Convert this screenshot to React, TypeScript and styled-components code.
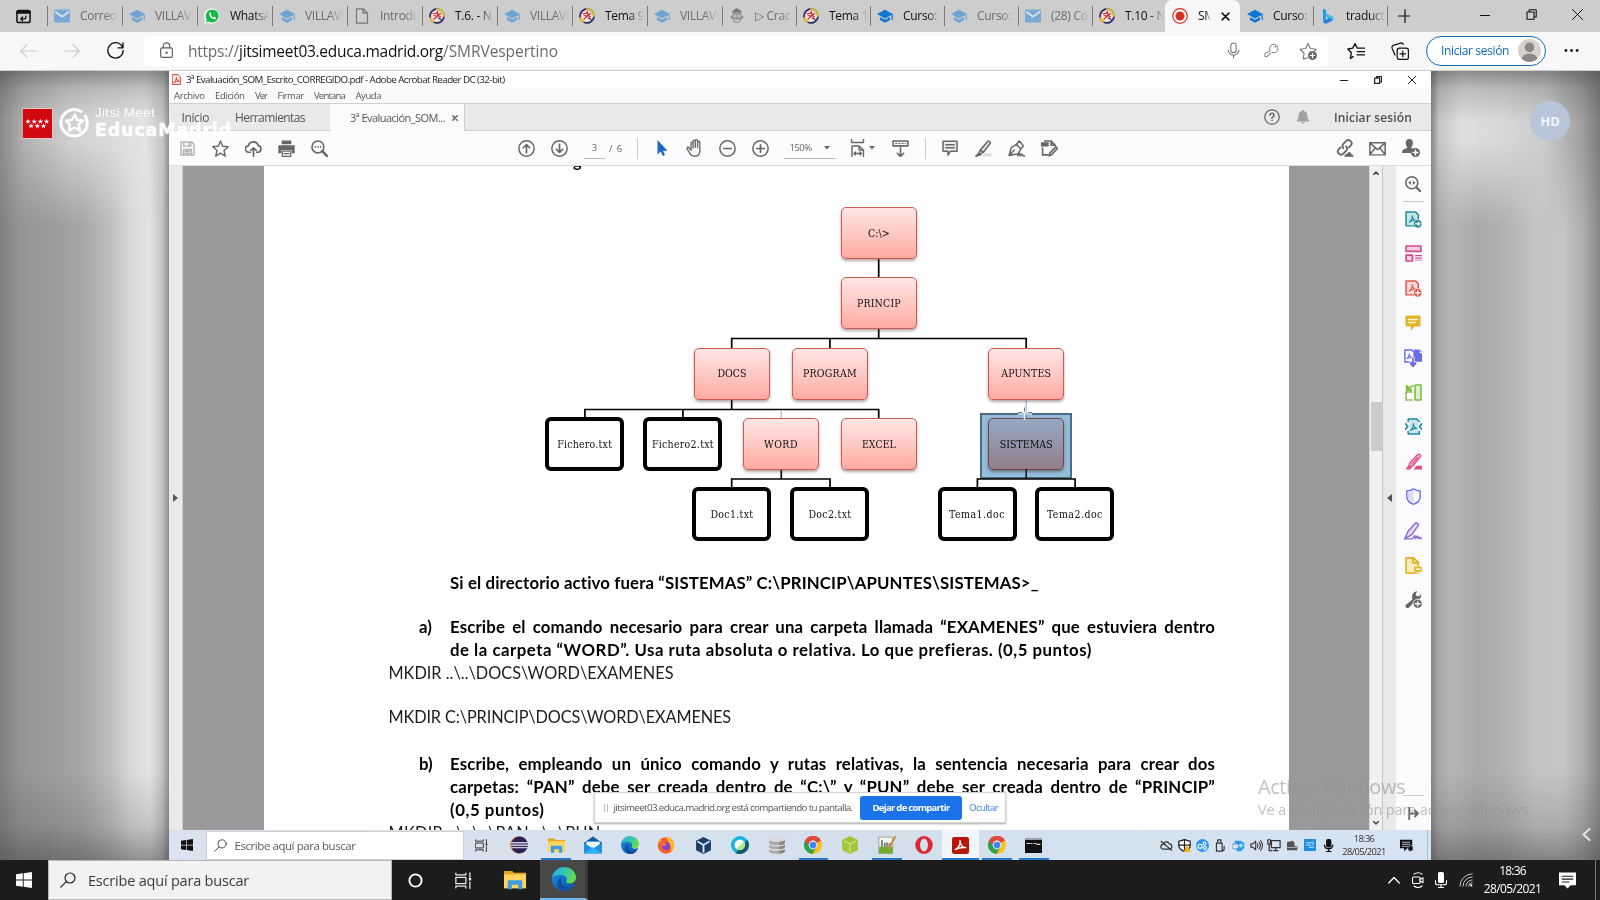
import React, { useLayoutEffect, useRef, useState } from 'react';
import styled, { createGlobalStyle, css } from 'styled-components';

const UI = '"Open Sans", "Noto Sans", sans-serif';

const Global = createGlobalStyle`
  * { box-sizing: border-box; }
  html, body { margin: 0; padding: 0; }
  body { width: 1600px; height: 900px; overflow: hidden; font-family: ${UI}; background: #1c1c1c; }
  svg { display: block; flex: none; }
`;

/* ---------- text that is tracked to a given width ---------- */
const Tracked = styled.span`
  display: inline-block;
  white-space: pre;
  flex: none;
`;

function Fit({ w, children, className }: { w: number; children: string; className?: string }) {
  const ref = useRef<HTMLSpanElement>(null);
  const [track, setTrack] = useState(0);
  useLayoutEffect(() => {
    if (ref.current) {
      setTrack((w - ref.current.getBoundingClientRect().width) / children.length);
    }
  }, []);
  return (
    <Tracked ref={ref} className={className} style={{ letterSpacing: `${track}px` }}>
      {children}
    </Tracked>
  );
}

/* ---------- generic pieces ---------- */
const Slot = styled.div<{ $w: number; $h?: string }>`
  width: ${(p) => p.$w}px;
  height: ${(p) => p.$h ?? '100%'};
  flex: none;
  display: flex;
  align-items: center;
  justify-content: center;
`;
const Space = styled.div<{ $w?: number }>`
  ${(p) => (p.$w === undefined ? css`flex: 1;` : css`flex: none; width: ${p.$w}px;`)}
`;

type IcoProps = { s?: number; h?: number; vb?: string; c?: string; sw?: number; children: React.ReactNode };
const Ico = ({ s = 16, h, vb = '0 0 16 16', c = 'currentColor', sw = 1, children }: IcoProps) => (
  <svg width={s} height={h ?? s} viewBox={vb} fill="none" stroke={c} strokeWidth={sw} strokeLinecap="round" strokeLinejoin="round">
    {children}
  </svg>
);

/* ---------- favicons ---------- */
const MailFav = () => (
  <Ico>
    <rect x="0" y="1.5" width="16" height="13" rx="1" fill="#7ba9d6" stroke="none" />
    <path d="M1.5 4 8 8.7 14.5 4" stroke="#dbe6f1" strokeWidth="1.6" />
  </Ico>
);
const CapFav = ({ c }: { c: string }) => (
  <Ico c="none">
    <path d="M8 1.8 0 6.1l8 4.4 6.6-3.6v5.2h1.2V6.1z" fill={c} />
    <path d="M2.9 8.9v3.1L8 14.8l5.100-2.800V8.900L8 11.700z" fill={c} />
  </Ico>
);
const WhatsFav = () => (
  <Ico c="none">
    <path d="M.3 15.800 1.300 12A7.600 7.600 0 1 1 4.200 14.700z" fill="#fff" />
    <circle cx="8.200" cy="7.900" r="6.500" fill="#14b84b" />
    <path d="M2 14.300 3 10.500 5.400 13.200z" fill="#14b84b" />
    <path d="M5.600 4.600c.5-.5 1-.3 1.200.2l.5 1.200c.1.300-.5.900-.5 1.100.6 1.200 1.500 1.900 2.600 2.400.3 0 .8-.9 1.100-.8l1.300.7c.5.300 0 1.600-1 1.900-2.600.5-6.600-3.500-5.200-6.700z" fill="#fff" />
  </Ico>
);
const FileFav = () => (
  <Ico c="#777" sw={1.2}><path d="M2.500.8h6.500l4.500 4.400v10h-11zM9 .8v4.400h4.500" /></Ico>
);
const MoodleFav = () => (
  <Ico c="none">
    <circle cx="8" cy="8" r="6.900" fill="#f2e3d6" stroke="#2b2a6b" strokeWidth="1.800" strokeDasharray="3 1" />
    <path d="M8 1.100A6.900 6.900 0 0 1 14.900 8" stroke="#d9c928" strokeWidth="1.800" strokeDasharray="3 1" />
    <path d="M1.300 10A6.900 6.900 0 0 0 4 13.800" stroke="#e0c52a" strokeWidth="1.800" />
    <path d="M4 5.500h3l1.500-2M8.500 4l.5 4M11.500 5.500 9 7.500l2.500 1.500M8.500 8 5 11M5 7.500 8 8" stroke="#d4263a" strokeWidth="1.200" />
    <path d="M9.500 10l2.500 1.500" stroke="#2b2a6b" strokeWidth="1.200" />
  </Ico>
);
const FaceFav = () => (
  <Ico c="none">
    <ellipse cx="8" cy="9" rx="5" ry="6.200" fill="#9a9a9e" />
    <path d="M1.500 8h2v3h-1zM14.500 8h-2v3h1z" fill="#8a8a8e" />
    <path d="M3 5c1-4 4-4 5-5 1 2 4 1 5 5-3-1.500-7-1.500-10 0z" fill="#77777c" />
    <path d="M5 8h2M9 8h2M6 12.200c1.500.8 3 .8 4 0" stroke="#e2e2e2" strokeWidth="1.200" />
  </Ico>
);
const RecFav = () => (
  <Ico><circle cx="8" cy="8" r="7.300" stroke="#d93025" strokeWidth="1.200" fill="#fff" /><circle cx="8" cy="8" r="4.500" fill="#d93025" stroke="none" /></Ico>
);
const BingFav = () => (
  <Ico c="none">
    <path d="M3 .8 6 2v9.500L3 13.800z" fill="#1b9de8" />
    <path d="M3 13.500 8 10.800 6.500 7.200 6 5.500l6.500 3.300c1.300 1.500.8 3-.2 4L6.500 15.500C5 15.700 3.500 15 3 13.500z" fill="#2a7be4" />
    <path d="M6 5.500l6.500 3.300c.8 1 1 2 .4 3L8 9.500z" fill="#36c5e0" />
  </Ico>
);

/* ---------- tab strip ---------- */
const Strip = styled.div`
  height: 32px;
  display: flex;
  align-items: stretch;
  background: #cdcdcd;
`;
const TabBox = styled.div<{ $w: number; $active?: boolean; $line?: boolean }>`
  width: ${(p) => p.$w}px;
  flex: none;
  display: flex;
  align-items: center;
  padding-left: 7px;
  gap: 10px;
  position: relative;
  overflow: hidden;
  ${(p) => p.$active && css`background: #f7f7f7; border-radius: 7px 7px 0 0;`}
  &::before {
    content: '';
    display: ${(p) => (p.$line ? 'block' : 'none')};
    position: absolute;
    left: 0;
    top: 6px;
    width: 1px;
    height: 20px;
    background: #7b7b7b;
  }
`;
const TabText = styled.span<{ $dim?: boolean; $w?: number }>`
  width: ${(p) => p.$w ?? 40}px;
  overflow: hidden;
  white-space: nowrap;
  font-size: 12px;
  letter-spacing: -0.3px;
  line-height: 18px;
  color: ${(p) => (p.$dim ? '#6c6c6c' : '#111')};
  -webkit-mask-image: linear-gradient(90deg, #000 60%, transparent 98%);
  mask-image: linear-gradient(90deg, #000 60%, transparent 98%);
`;
const dimBlue = '#6fa3d3';
const tabs: { t: string; icon: React.ReactNode; dim?: boolean; w: number; line?: boolean }[] = [
  { t: 'Correo V', icon: <MailFav />, dim: true, w: 75, line: true },
  { t: 'VILLAVE', icon: <CapFav c={dimBlue} />, dim: true, w: 75, line: true },
  { t: 'WhatsA', icon: <WhatsFav />, w: 75, line: true },
  { t: 'VILLAVE', icon: <CapFav c={dimBlue} />, dim: true, w: 75, line: true },
  { t: 'Introdu', icon: <FileFav />, dim: true, w: 75, line: true },
  { t: 'T.6. - N', icon: <MoodleFav />, w: 75, line: true },
  { t: 'VILLAVE', icon: <CapFav c={dimBlue} />, dim: true, w: 75, line: true },
  { t: 'Tema 9', icon: <MoodleFav />, w: 75, line: true },
  { t: 'VILLAVE', icon: <CapFav c={dimBlue} />, dim: true, w: 75, line: true },
  { t: '▷ Crac', icon: <FaceFav />, dim: true, w: 74, line: true },
  { t: 'Tema 1', icon: <MoodleFav />, w: 74, line: true },
  { t: 'Curso: ', icon: <CapFav c="#0c78d2" />, w: 74, line: true },
  { t: 'Curso: S', icon: <CapFav c={dimBlue} />, dim: true, w: 74, line: true },
  { t: '(28) Co', icon: <MailFav />, dim: true, w: 74, line: true },
  { t: 'T.10 - N', icon: <MoodleFav />, w: 73, line: true },
];

const TabStrip = () => (
  <Strip>
    <Slot $w={47}>
      <Ico s={15} c="#111" sw={1.6}>
        <rect x="1" y="1.500" width="14" height="13" rx="2" />
        <path d="M1.500 3.500h13" strokeWidth="3" />
        <path d="M10.500 7.500v1.500a1.500 1.500 0 0 1-1.500 1.500H5.500M7 8.500l-2 2 2 2" strokeWidth="1.400" />
      </Ico>
    </Slot>
    {tabs.map((t, i) => (
      <TabBox key={i} $w={t.w} $line={t.line}>
        {t.icon}
        <TabText $dim={t.dim}>{t.t}</TabText>
      </TabBox>
    ))}
    <TabBox $w={75} $active>
      <RecFav />
      <TabText $w={13}>SM</TabText>
      <Ico s={9} c="#111" sw={1.800}><path d="M2 2l12 12M14 2L2 14" strokeWidth="2.800" /></Ico>
    </TabBox>
    <TabBox $w={73}><CapFav c="#0c78d2" /><TabText>Curso: V</TabText></TabBox>
    <TabBox $w={74} $line><BingFav /><TabText>traduct</TabText></TabBox>
    <TabBox $w={38} $line>
      <Ico s={16} c="#111" sw={1.200}><path d="M11.500 1v13M5 7.500h13" transform="translate(-.5 .5)" /></Ico>
    </TabBox>
    <Space />
    <Slot $w={46} $h="29px"><Ico s={10} c="#111" vb="0 0 10 10"><path d="M0 5.500h10" /></Ico></Slot>
    <Slot $w={46} $h="29px"><Ico s={11} c="#111" vb="0 0 11 11" sw={1.100}><path d="M1 3h7v7.200H1zM3.200 3V.8h7V8H8" /></Ico></Slot>
    <Slot $w={46} $h="29px"><Ico s={11} c="#111" vb="0 0 11 11"><path d="M.5.5l10 10M10.500.5l-10 10" /></Ico></Slot>
  </Strip>
);

/* ---------- address bar row ---------- */
const NavBar = styled.div`
  height: 39px;
  display: flex;
  align-items: center;
  background: #f7f7f7;
  border-bottom: 1px solid #cfcfcf;
  padding-bottom: 1px;
`;
const Omnibox = styled.div`
  width: 1184px;
  height: 30px;
  flex: none;
  display: flex;
  align-items: center;
  background: #fff;
  border-radius: 4px;
  font-size: 15.500px;
  color: #6b6b6b;
  b { font-weight: 400; color: #111; }
`;
const Url = styled.div`
  display: flex;
  align-items: center;
  line-height: 22px;
`;
const SignIn = styled.div`
  width: 120px;
  height: 30px;
  flex: none;
  display: flex;
  align-items: center;
  justify-content: space-between;
  padding: 0 4px 1px 14px;
  border: 1px solid #0f6cbd;
  border-radius: 15px;
  background: #fff;
  font-size: 12px;
  color: #0f6cbd;
`;
const Nav = () => (
  <NavBar>
    <Space $w={6} />
    <Slot $w={44}><Ico c="#c9c9c9" sw={1.100}><path d="M15.500 8H.7M7 1.700.7 8 7 14.300" /></Ico></Slot>
    <Slot $w={44}><Ico c="#c9c9c9" sw={1.100}><path d="M.5 8h14.800M9 1.700 15.300 8 9 14.300" /></Ico></Slot>
    <Slot $w={43}><Ico s={17} c="#111" sw={1.300}><path d="M14.800 5.500A7.200 7.200 0 1 0 15.200 8M15 1v4.500h-4.500" /></Ico></Slot>
    <Space $w={7} />
    <Omnibox>
      <Slot $w={44}><Ico s={17} c="#5f5f5f" sw={1.100}><rect x="2.500" y="5.500" width="11" height="9" rx="1.500" /><path d="M5 5.500V3.800a3 3 0 0 1 6 0v1.700" /><circle cx="8" cy="10" r=".6" fill="#5f5f5f" /></Ico></Slot>
      <Url>
        <Fit w={51}>https://</Fit><b><Fit w={204}>jitsimeet03.educa.madrid.org</Fit></b><Fit w={115}>/SMRVespertino</Fit>
      </Url>
      <Space />
      <Slot $w={38}><Ico s={17} c="#777" sw={1}><rect x="5.500" y="1" width="5" height="9" rx="2.500" /><path d="M3 7.500a5 5 0 0 0 10 0M8 12.500V15" /></Ico></Slot>
      <Slot $w={38}><Ico s={15} c="#777" sw={1}><path d="M6.500 8.200A4.500 4.500 0 1 1 8.500 10L7 11.500H5.500V13H4v1.500H1v-3z" /><circle cx="12" cy="4" r=".5" /></Ico></Slot>
      <Slot $w={36}><Ico s={18} c="#777" sw={1}><path d="M8 14 3.800 15l.7-5L1 6.500l5-.7L8 1.300l2.200 4.500 5 .7-1.500 1.500" /><circle cx="12" cy="12" r="4" fill="#6c6c6c" stroke="none" /><path d="M12 10v4M10 12h4" stroke="#fff" /></Ico></Slot>
      <Space $w={2} />
    </Omnibox>
    <Space $w={6} />
    <Slot $w={44}><Ico s={18} c="#111" sw={1.200}><path d="M5.500 13 3 14.500l.8-5L.8 6.200l4.300-.7L7.200 1.500l2 4h3.300M9 8.500h6.500M9 11.500h6.500M10.500 5.500h5" /></Ico></Slot>
    <Slot $w={44}><Ico s={18} c="#111" sw={1.100}><rect x="5.500" y="5.500" width="10" height="10" rx="2" /><path d="M10.500 8v5M8 10.500h5M3.500 11.500 1 5.500A2 2 0 0 1 2 3l6.500-2a2 2 0 0 1 2.400 1.200" /></Ico></Slot>
    <Space $w={4} />
    <SignIn>
      <Fit w={68}>Iniciar sesión</Fit>
      <Ico s={23} vb="0 0 22 22" c="none"><circle cx="11" cy="11" r="11" fill="#d5d2cf" /><circle cx="11" cy="8" r="4.600" fill="#8b8683" /><path d="M3.500 19c1-6.500 14-6.500 15 0a11 11 0 0 1-15 0z" fill="#8b8683" /></Ico>
    </SignIn>
    <Slot $w={51}><Ico s={15} c="none"><g fill="#111"><circle cx="2" cy="8" r="1.500" /><circle cx="8" cy="8" r="1.500" /><circle cx="14" cy="8" r="1.500" /></g></Ico></Slot>
  </NavBar>
);

/* ---------- meeting stage ---------- */
const Stage = styled.div`
  height: 789px;
  display: flex;
  position: relative;
  overflow: hidden;
`;
const Gutter = styled.div<{ $side: 'left' | 'right' }>`
  width: 169px;
  flex: none;
  position: relative;
  background: ${(p) =>
    p.$side === 'left'
      ? 'linear-gradient(90deg, #808080 0, #949494 20px, #9d9d9d 55px, #a8a8a8 85px, #c0c0c0 112px, #dadada 132px, #e3e3e3 150px, #c4c4c4 162px, #8f8f8f 169px)'
      : 'linear-gradient(90deg, #858585 0, #a8a8a8 7px, #b5b5b5 20px, #aaaaaa 48px, #b2b2b2 75px, #c5c4c2 105px, #c4c5c5 132px, #adadad 152px, #888888 169px)'};
  &::before {
    content: '';
    position: absolute;
    inset: 0;
    background: ${(p) =>
      p.$side === 'left'
        ? 'linear-gradient(90deg, #8a8a8a 0, #b2b2b2 25px, #d0d0d0 70px, #e4e4e4 145px, #c4c4c4 163px, #8f8f8f 169px)'
        : 'linear-gradient(90deg, #858585 0, #c4c4c4 8px, #dedede 30px, #d8d8d8 70px, #c9cbca 115px, #a0a0a0 150px, #7c7c7c 169px)'};
    -webkit-mask-image: linear-gradient(180deg, #000 70px, transparent 155px);
    mask-image: linear-gradient(180deg, #000 70px, transparent 155px);
  }
  &::after {
    content: '';
    position: absolute;
    inset: 0;
    background: linear-gradient(180deg, rgba(60, 60, 60, 0.500) 0, rgba(60, 60, 60, 0.200) 18px, transparent 50px, transparent 700px, rgba(60, 60, 60, 0.180) 755px, rgba(60, 60, 60, 0.480) 789px);
  }
`;
const Share = styled.div`
  width: 1262px;
  flex: none;
  display: flex;
  flex-direction: column;
  position: relative;
  background: #fff;
`;

/* ---------- acrobat chrome ---------- */
const TitleBar = styled.div`
  height: 17px;
  display: flex;
  align-items: center;
  padding: 0 2px 0 3px;
  gap: 5px;
  font-size: 9.800px;
  color: #222;
  background: #fff;
`;
const MenuBar = styled.div`
  height: 15px;
  display: flex;
  align-items: center;
  padding: 0 0 0 5px;
  font-size: 9.500px;
  color: #555;
  background: #fafafa;
`;
const AcroTabs = styled.div`
  height: 28px;
  display: flex;
  align-items: center;
  font-size: 12px;
  color: #555;
  background: #e9e9e9;
  border-top: 1px solid #cfcfcf;
  border-bottom: 1px solid #cfcfcf;
`;
const AcroTab = styled.div`
  width: 135px;
  height: 28px;
  margin-bottom: -1px;
  display: flex;
  align-items: center;
  padding-left: 20px;
  gap: 7px;
  font-size: 11px;
  background: #fbfbfd;
  border-right: 1px solid #cfcfcf;
`;
const Strong = styled.span`
  font-weight: 600;
  font-size: 12px;
  color: #4f4f4f;
`;
const ToolBar = styled.div`
  height: 35px;
  display: flex;
  align-items: center;
  color: #666;
  font-size: 9.500px;
  background: #fcfcfe;
  border-bottom: 1px solid #dcdcde;
`;
const Field = styled.div<{ $w: number }>`
  width: ${(p) => p.$w}px;
  height: 22px;
  flex: none;
  display: flex;
  align-items: center;
  justify-content: space-around;
  border-bottom: 1px solid #bdbdbd;
`;
const Rule = styled.div`
  width: 1px;
  height: 21px;
  flex: none;
  background: #cccccc;
`;
const Caret = () => <Ico s={6} h={4} vb="0 0 6 4" c="none"><path d="M0 0h6L3 3.600z" fill="#666" /></Ico>;
const G = '#666';

const AcrobatTop = () => (
  <>
    <TitleBar>
      <Ico s={9} h={11} vb="0 0 9 11" c="#d8402f"><path d="M.6.600h5.400l2.400 2.500v7.300H.6z" fill="#fdeae7" /><path d="M2 8.500c1.500-1 2.500-3 2.300-5 .3 2.300 1.300 3.500 3 3.700C5.500 7 3.500 7.300 2 8.500z" /></Ico>
      <Fit w={318.500}>3ª Evaluación_SOM_Escrito_CORREGIDO.pdf - Adobe Acrobat Reader DC (32-bit)</Fit>
      <Space />
      <Slot $w={34}><Ico s={8} vb="0 0 8 8" c="#222"><path d="M0 4.500h8" /></Ico></Slot>
      <Slot $w={24}><Ico s={8} vb="0 0 8 8" c="#222" sw={1.200}><path d="M.6 2.200h5v5.200h-5zM2.500 2V.6h5V6H6" /></Ico></Slot>
      <Slot $w={34}><Ico s={8} vb="0 0 8 8" c="#222"><path d="M.4.400l7.200 7.200M7.600.400.4 7.600" /></Ico></Slot>
    </TitleBar>
    <MenuBar>
      <Fit w={30.500}>Archivo</Fit><Space $w={10.500} />
      <Fit w={29.500}>Edición</Fit><Space $w={10.500} />
      <Fit w={12}>Ver</Fit><Space $w={10.500} />
      <Fit w={26}>Firmar</Fit><Space $w={10.500} />
      <Fit w={31}>Ventana</Fit><Space $w={10.500} />
      <Fit w={25.500}>Ayuda</Fit>
    </MenuBar>
    <AcroTabs>
      <Space $w={12.500} /><Fit w={27.500}>Inicio</Fit>
      <Space $w={26} /><Fit w={70}>Herramientas</Fit>
      <Space $w={25} />
      <AcroTab>
        <Fit w={95}>3ª Evaluación_SOM...</Fit>
        <Ico s={6} vb="0 0 6 6" c="#555" sw={1.300}><path d="M.8.800l4.400 4.400M5.200.800.8 5.200" /></Ico>
      </AcroTab>
      <Space />
      <Ico s={16} c={G} sw={1.300}><circle cx="8" cy="8" r="7.200" /><path d="M6 6.200a2 2 0 1 1 2.500 2c-.4.200-.5.400-.5 1M8 11.300v.2" strokeWidth="1.500" /></Ico>
      <Space $w={16} />
      <Ico s={14} c="none"><path d="M8 0c.8 0 1.200.5 1.200 1.200C12 2 13 4 13 6.500c0 3 .8 4 2 5.500v1H1v-1c1.200-1.500 2-2.500 2-5.500 0-2.500 1-4.500 3.800-5.300C6.800.500 7.200 0 8 0zM6 14h4c0 2.200-4 2.200-4 0z" fill="#a2a2a2" /></Ico>
      <Space $w={24} />
      <Strong><Fit w={78}>Iniciar sesión</Fit></Strong>
      <Space $w={19} />
    </AcroTabs>
    <ToolBar>
      <Space $w={2} />
      <Slot $w={33}><Ico s={15} c="#b3b3b3" sw={1.500}><path d="M1 1h11.500L15 3.500V15H1zM4 1v4.500h7.500V1M3.800 15V9h8.400v6M5.500 11h5M5.500 13h5M9.500 2.500v1.500" /></Ico></Slot>
      <Slot $w={33}><Ico s={17} c={G} sw={1.300}><path d="M8 1l2.100 4.900 5.200.5-4 3.500 1.200 5.200L8 12.400l-4.500 2.700 1.200-5.200-4-3.500 5.200-.5z" /></Ico></Slot>
      <Slot $w={33}><Ico s={17} c={G} sw={1.500}><path d="M5 11.500H3.500a3 3 0 0 1-.3-6 4.800 4.800 0 0 1 9.300-.2 3.200 3.200 0 0 1 .2 6.200H11M8 15.500V7.500M5.500 9.800 8 7.300l2.500 2.500" /></Ico></Slot>
      <Slot $w={32}><Ico s={17} c="none"><path d="M3.500.5h9v3.500h-9zM.3 5h15.400v7.500H13V9.500H3v3H.3z" fill={G} /><path d="M4 10.500h8v5H4z" fill="#fff" stroke={G} strokeWidth="1.200" /><path d="M5.500 12.800h5" stroke={G} /></Ico></Slot>
      <Slot $w={35}><Ico s={17} c={G} sw={1.500}><circle cx="6.500" cy="6.500" r="5.600" /><path d="M10.800 10.800 15 15" strokeWidth="2.300" /><path d="M4 6.500h.1M6.500 6.500h.1M9 6.500h.1" /></Ico></Slot>
      <Space $w={172.500} />
      <Slot $w={33}><Ico s={17} c={G} sw={1.400}><circle cx="8" cy="8" r="7.200" /><path d="M8 12V4.500M5 7.300 8 4.300l3 3" strokeWidth="1.600" /></Ico></Slot>
      <Slot $w={33}><Ico s={17} c={G} sw={1.400}><circle cx="8" cy="8" r="7.200" /><path d="M8 4v7.500M5 8.700l3 3 3-3" strokeWidth="1.600" /></Ico></Slot>
      <Space $w={8.500} />
      <Field $w={21}>3</Field>
      <Space $w={4} />
      <Fit w={13}>/  6</Fit>
      <Space $w={15} />
      <Rule />
      <Space $w={7} />
      <Slot $w={33}><Ico s={16} c="none"><path d="M3.500 0v14.500l3.300-3 2 4.500 2.200-1-2-4.300h4.500z" fill="#1b66c9" /></Ico></Slot>
      <Slot $w={33}><Ico s={18} c={G} sw={1.200}><path d="M4.500 9V3.700c0-1.200 1.800-1.200 1.800 0V2c0-1.300 2-1.300 2 0v-.5c0-1.200 2-1.200 2 0V3c0-1.300 2-1.300 2 0v7.500c0 3-1.500 4.800-4.500 4.800-2.500 0-3.800-1-5-3.500L1 8.800c-.6-1.300 1-2 1.800-.8L4.500 10M6.300 3.500V8M8.300 2v5.500M10.300 3v4.700" /></Ico></Slot>
      <Slot $w={32.500}><Ico s={17} c={G} sw={1.400}><circle cx="8" cy="8" r="7.200" /><path d="M4.500 8h7" strokeWidth="1.600" /></Ico></Slot>
      <Slot $w={33}><Ico s={17} c={G} sw={1.400}><circle cx="8" cy="8" r="7.200" /><path d="M4.500 8h7M8 4.500v7" strokeWidth="1.600" /></Ico></Slot>
      <Space $w={7} />
      <Field $w={52}><Fit w={22}>150%</Fit><Caret /></Field>
      <Space $w={14} />
      <Ico s={16} h={18} vb="0 0 16 18" c={G} sw={1.400}><path d="M1.500 0v3.500h12V0M2 18V7h7l4.500 4V18M9 7v4h4.500M4 14.500h7.500M5.500 13 4 14.500 5.500 16M10 13l1.500 1.500L10 16" /></Ico>
      <Space $w={3} /><Caret />
      <Space $w={14} />
      <Slot $w={24}><Ico s={17} c={G} sw={1.500}><rect x="1" y="1" width="14" height="4.500" /><path d="M3.500 3.200h1M6.500 3.200h1M9.500 3.200h1M12.500 3.200h.3" strokeWidth="1" /><path d="M8 7v8M5 12.500l3 3 3-3" /></Ico></Slot>
      <Space $w={12} />
      <Rule />
      <Space $w={8} />
      <Slot $w={33}><Ico s={16} c={G} sw={1.500}><path d="M1 1.200h14v10H8.500L6 15v-3.800H1zM3.800 4.700h8.400M3.800 7.700h8.400" fill="#eee" /></Ico></Slot>
      <Slot $w={33}><Ico s={17} c={G} sw={1.400}><path d="M5.500 15.500h10v-3H9z" fill="#ddd" stroke="none" /><path d="M5 9.500 12 1.200c1-1 3.200.8 2.300 2L8 11.500zM5 9.500 3.500 13l1 .7L8 11.500" fill="#ddd" /><path d="M.8 15.300 3.500 12.500 5 14z" fill={G} /></Ico></Slot>
      <Slot $w={33}><Ico s={17} c={G} sw={1.400}><path d="M1 14.500 3 7.500 8 4l4 4.500-2.500 4.500zM1 14.500 6 9.500M8 4l2.500-3 4 4.500-2.500 3M9 14.800l2-2 .5 2 1.500-1.500.8 1.500H16" /></Ico></Slot>
      <Slot $w={33}><Ico s={17} c={G} sw={1.500}><path d="M.5 3h6M.5 5h6" strokeWidth="2" /><path d="M3.500 1h6l4 4M1.500 7.500v6.500h5M9.500 1v4H13" /><path d="M7.500 14.800l.8-2.500L14 6.500l1.500 1.500-5.700 6z" /></Ico></Slot>
      <Space />
      <Slot $w={33}><Ico s={18} c={G} sw={1.600}><path d="M6.500 8.200a2.800 2.800 0 0 1 .2-4L9 1.900a2.800 2.800 0 0 1 4 4L11.500 7.500M9 6.500a2.800 2.800 0 0 1 0 4l-2.500 2.600a2.800 2.800 0 0 1-4-4L4 7.500" /><path d="M7.500 15.700c0-2 1.500-2.500 2.300-2.200.3-2.500 3.500-2.500 3.900 0 2 .2 2 2.200 2 2.200z" fill={G} stroke="none" /></Ico></Slot>
      <Slot $w={33}><Ico s={17} c={G} sw={1.400}><path d="M.8 2.500h14.400v11.500H.8zM1 3l7 6 7-6M1 13.500 6 7.500M15 13.500l-5-6" /></Ico></Slot>
      <Slot $w={33}><Ico s={18} c="none"><path d="M6.500 0c2.500 0 3.300 1.700 3.200 3.500 0 1.700-.7 3-1.500 3.700L8.500 8l2.500 1.500A4.500 4.500 0 0 0 8 12.500H0c0-3 1.500-3.500 4.500-4.500l.2-.8C3.900 6.500 3.300 5.200 3.300 3.500 3.200 1.700 4 0 6.500 0z" fill={G} /><circle cx="12" cy="12" r="4" fill={G} /><path d="M12 9.800v4.400M9.800 12h4.400" stroke="#fff" strokeWidth="1.200" /></Ico></Slot>
      <Space $w={4} />
    </ToolBar>
  </>
);

/* ---------- document ---------- */
const Work = styled.div`
  height: 664px;
  display: flex;
  overflow: hidden;
`;
const Handle = styled.div<{ $w: number; $edge: 'left' | 'right' }>`
  width: ${(p) => p.$w}px;
  flex: none;
  display: flex;
  align-items: center;
  justify-content: center;
  background: #e9e9e9;
  ${(p) => (p.$edge === 'right' ? 'border-right: 1px solid #cfcfcf;' : 'border-left: 1px solid #c4c4c4;')}
`;
const Desk = styled.div`
  width: 1186px;
  flex: none;
  display: flex;
  padding-left: 81px;
  background: #99999b;
`;
const Paper = styled.div`
  width: 1025px;
  flex: none;
  background: #fff;
  overflow: hidden;
  font-family: Lato, "Open Sans", sans-serif;
  font-size: 16.300px;
  line-height: 23px;
  color: #0c0c0c;
`;
const Cut = styled.div`
  height: 405px;
  position: relative;
  overflow: hidden;
`;
const CutText = styled.div`
  position: absolute;
  top: -17px;
  left: 309px;
  font-weight: 700;
`;
const Answer = styled.div<{ $mt?: number }>`
  margin-top: ${(p) => p.$mt ?? 0}px;
  padding-left: 124.500px;
  height: 23px;
  color: #1c1c1c;
`;
const Question = styled.div<{ $mt?: number }>`
  margin-top: ${(p) => p.$mt ?? 0}px;
  display: grid;
  grid-template-columns: 31px 765px;
  padding-left: 155px;
  font-size: 16.800px;
  font-weight: 700;
  color: #000;
`;
const Lines = styled.div`
  display: flex;
  flex-direction: column;
`;
const Full = styled.div`
  height: 23px;
  white-space: nowrap;
  text-align: justify;
  text-align-last: justify;
  letter-spacing: 0.150px;
`;
const Line = styled.div`
  height: 23px;
`;

/* ---------- directory tree ---------- */
const Node = styled.div<{ $x: number; $y: number; $file?: boolean }>`
  position: absolute;
  left: ${(p) => p.$x - 264 - (p.$file ? 39.500 : 38.300)}px;
  top: ${(p) => p.$y - 166 - (p.$file ? 27 : 25.700)}px;
  width: ${(p) => (p.$file ? 79 : 76.600)}px;
  height: ${(p) => (p.$file ? 54 : 51.500)}px;
  display: flex;
  align-items: center;
  justify-content: center;
  border-radius: 5px;
  font-family: "DejaVu Serif Condensed", "DejaVu Serif", serif;
  font-stretch: condensed;
  font-size: 10.500px;
  color: #111;
  ${(p) =>
    p.$file
      ? css`border: 4px solid #000; background: #fff; border-radius: 6px;`
      : css`
          border: 1.300px solid #cc5b52;
          background: linear-gradient(180deg, #ffe6e3 0%, #ffc9c4 50%, #ffaaa1 100%);
          box-shadow: 0 2px 3px rgba(90, 60, 60, 0.450);
        `}
`;
const Selection = styled.div`
  position: absolute;
  left: 716px;
  top: 247px;
  width: 92px;
  height: 66px;
  border: 2px solid #4d6c82;
  background: #94bcdb;
  mix-blend-mode: multiply;
`;
const TreeArt = styled.svg`
  position: absolute;
  left: 0;
  top: 0;
`;
const nodes: [string, number, number, number, boolean?][] = [
  ['C:\\>', 878.900, 233, 22], ['PRINCIP', 878.900, 303, 44],
  ['DOCS', 732, 373.700, 29], ['PROGRAM', 829.900, 373.700, 54], ['APUNTES', 1026.200, 373.700, 50],
  ['WORD', 781, 444, 34], ['EXCEL', 878.900, 444, 34], ['SISTEMAS', 1026.200, 444, 53],
  ['Fichero.txt', 584.700, 444, 55, true], ['Fichero2.txt', 682.900, 444, 62, true],
  ['Doc1.txt', 731.900, 514, 43, true], ['Doc2.txt', 829.900, 514, 43, true],
  ['Tema1.doc', 977, 514, 56, true], ['Tema2.doc', 1074.900, 514, 56, true],
];
const Tree = () => (
  <Cut>
    <CutText>g</CutText>
    <TreeArt width="1025" height="405" viewBox="264 166 1025 405" fill="none" stroke="#000" strokeWidth="1.700">
      <path d="M878.700 258v20M878.700 328v10.500M731.700 348.500v-10h294.500v10M829.900 338.500v10M731.700 399v10.500M584.900 418v-8.500h293.800v9M682.900 409.500v8.500M781.300 470v9M731.700 488v-9h98.300v9" />
      <path d="M781.300 410v8.500M1026.200 399v19" stroke="#a9bbd8" strokeWidth="1.300" />
      <path d="M977.400 488v-9h97.700v9" />
    </TreeArt>
    {nodes.map(([t, x, y, w, file]) => (
      <Node key={t} $x={x} $y={y} $file={file}><Fit w={w}>{t}</Fit></Node>
    ))}
    <Selection />
    <TreeArt width="1025" height="405" viewBox="264 166 1025 405" fill="none">
      <path d="M1026.200 469v9" stroke="#111" strokeWidth="1.500" />
      <path d="M1024.500 412v8M1018 414h14" stroke="#dfe6ea" strokeWidth="1.600" />
      <path d="M1024.500 407.500v4M1018 412.500h4M1028 412.500h4" stroke="#555" strokeWidth=".8" />
    </TreeArt>
  </Cut>
);

const DocPage = () => (
  <Paper>
    <Tree />
    <Question><span /><Line><Fit w={589}>Si el directorio activo fuera “SISTEMAS” C:\PRINCIP\APUNTES\SISTEMAS&gt;_</Fit></Line></Question>
    <Question $mt={20.500}>
      <span>a)</span>
      <Lines>
        <Full>Escribe el comando necesario para crear una carpeta llamada “EXAMENES” que estuviera dentro</Full>
        <Line><Fit w={642}>de la carpeta “WORD”. Usa ruta absoluta o relativa. Lo que prefieras. (0,5 puntos)</Fit></Line>
      </Lines>
    </Question>
    <Answer><Fit w={285}>MKDIR ..\..\DOCS\WORD\EXAMENES</Fit></Answer>
    <Answer $mt={21}><Fit w={342.500}>MKDIR C:\PRINCIP\DOCS\WORD\EXAMENES</Fit></Answer>
    <Question $mt={24.500}>
      <span>b)</span>
      <Lines>
        <Full>Escribe, empleando un único comando y rutas relativas, la sentencia necesaria para crear dos</Full>
        <Full>carpetas: “PAN” debe ser creada dentro de “C:\” y “PUN” debe ser creada dentro de “PRINCIP”</Full>
        <Line><Fit w={94.500}>(0,5 puntos)</Fit></Line>
      </Lines>
    </Question>
    <Answer><Fit w={212}>MKDIR ..\..\..\PAN ..\..\PUN</Fit></Answer>
  </Paper>
);

const Scroll = styled.div`
  width: 13px;
  flex: none;
  display: flex;
  flex-direction: column;
  align-items: center;
  background: #f1f0f2;
  border-left: 1px solid #dadada;
`;
const Arrow = styled.div`
  height: 14px;
  flex: none;
  display: flex;
  align-items: center;
`;
const Thumb = styled.div`
  width: 11px;
  height: 49px;
  margin: 222px 0 auto;
  background: #cccbcd;
`;

/* ---------- acrobat tools panel ---------- */
const Panel = styled.div`
  width: 34px;
  flex: none;
  display: flex;
  flex-direction: column;
  align-items: center;
  background: #fbfbfd;
`;
const Tool = styled.div<{ $h?: number }>`
  height: ${(p) => p.$h ?? 34.600}px;
  flex: none;
  display: flex;
  align-items: center;
`;
const Divider = styled.div`
  width: 21px;
  height: 1px;
  flex: none;
  background: #cdcdcd;
`;
const swirl = 'M4 10.500c2-1.500 3-4 2.800-6.200.3 2.800 1.500 4.200 3.500 4.500-2.300-.2-4.300.3-6.300 1.700z';
const toolIcons: React.ReactNode[] = [
  <Ico s={17} c="#1d8a9a" sw={1.400}><path d="M1 1h9l2.500 2.500V14H1z" fill="#c6e7ec" /><path d={swirl} strokeWidth="1" /><circle cx="12" cy="12" r="4" fill="#1d8a9a" stroke="#fff" strokeWidth=".6" /><path d="M10 12h4M12.500 10.500 14 12l-1.500 1.500" stroke="#fff" strokeWidth="1.200" /></Ico>,
  <Ico s={17} c="#d3478f" sw={1.500}><path d="M1 1h14v5H1z" fill="#f6cfe2" /><path d="M1 9.500h6V15H1z" fill="#f6cfe2" /><path d="M10 10h5.500M10 12.300h5.500" strokeWidth="1.200" /><path d="M10 14.500h5.500" stroke="#efaacd" /></Ico>,
  <Ico s={17} c="#e5544d" sw={1.400}><path d="M1 1h9l2.500 2.500V14H1z" fill="#fbd9d6" /><path d={swirl} strokeWidth="1" /><circle cx="12" cy="12" r="4" fill="#e5544d" stroke="#fff" strokeWidth=".6" /><path d="M10 12h4M12 10v4" stroke="#fff" strokeWidth="1.200" /></Ico>,
  <Ico s={16} c="none"><path d="M1.500.500h13a1 1 0 0 1 1 1v9a1 1 0 0 1-1 1H9.500L6 15.500v-4H1.500a1 1 0 0 1-1-1v-9a1 1 0 0 1 1-1z" fill="#e2b428" /><path d="M3.500 4.500h9M3.500 7.500h7" stroke="#fdf4d3" strokeWidth="1.300" /></Ico>,
  <Ico s={18} c="#6a6ee6" sw={1.300}><path d="M.8.800H7L9 3v8.500H.8z" /><path d="M2.500 8.500c1.500-1 2.300-2.500 2.200-4.300.2 2 1 3 2.500 3.300-1.600-.1-3.200.2-4.700 1z" strokeWidth=".9" /><path d="M9 .5h5v3.300h2v7.500H9zM14.600.5 16 2.500h-1.400z" fill="#6a6ee6" stroke="none" /><path d="M8 8v6M5.500 12.500h5L8 15.500z" fill="#6a6ee6" stroke="#fbfbfd" strokeWidth="2.800" /><path d="M8 8v6M5.500 12.500h5L8 15.500z" fill="#6a6ee6" strokeWidth="1.500" /></Ico>,
  <Ico s={17} c="#82bc45" sw={1.500}><path d="M9.500 1h5.500v14H9.500z" fill="#dff0ca" /><path d="M1 7.500h6M1 15h6.500M1 8v7" strokeDasharray="2 1.500" /><path d="M1.500 1.500v4.500H6zM3.500 4 7.500 1.500" fill="#82bc45" /></Ico>,
  <Ico s={17} c="#1d8a9a" sw={1.400}><path d="M3 1h8l2.500 2.500V15H3z" fill="#c6e7ec" /><path d="M5 11.500c2-1.500 3-4 2.800-6.200.3 2.800 1.500 4.200 3.500 4.500-2.300-.2-4.300.3-6.300 1.700z" strokeWidth="1" /><path d="M3 5v6M13.500 5v6" stroke="#fbfbfd" strokeWidth="2.500" /><path d="M.5 5.500 2.500 8l-2 2.500M15.700 5.500l-2 2.500 2 2.500" strokeWidth="1.600" /></Ico>,
  <Ico s={17} c="#e24c8b" sw={1.300}><path d="M8 15.500h8v-3.500h-5z" fill="#e24c8b" stroke="none" /><path d="M4.500 9.500 12 1.500c1.300-1.200 3.500.8 2.400 2.200L7.500 12 4 13.500z" fill="#fbd3e3" /><path d="M.5 15.500 3.500 11l3 2.500-1.500 2z" fill="#e24c8b" stroke="none" /><path d="M6.500 10.500 12 4" /></Ico>,
  <Ico s={17} c="#6a6ee6" sw={1.300}><path d="M8 .8c2 1.300 4.200 1.900 6.300 2v5.700c0 3-2.800 5.500-6.300 6.900-3.500-1.400-6.300-3.900-6.300-6.900V2.800C3.800 2.700 6 2.100 8 .8z" /><path d="M8 1.800v12.600c-3-1.300-5.300-3.300-5.300-6V3.600c2-.1 3.700-.8 5.300-1.800z" fill="#dcdcf8" stroke="none" /></Ico>,
  <Ico s={18} c="#9269d3" sw={1.300}><path d="M.8 15 3.500 8.500 10 1.200c1.200-1.200 3.500.7 2.500 2.200L7 11 4 13z" fill="#e8dcf8" /><path d="M.8 15h6.500l2.200-3 .5 2.800 1.700-2.300.8 2.200 1.500-1.400.3 1.400H16" /></Ico>,
  <Ico s={17} c="#deb10e" sw={1.500}><path d="M1 .8h7L12.500 5v10H1z" fill="#f9edc0" /><path d="M7.500.8V5.500h5" /><path d="M8.500 9H16v5h-3l-1.500 2v-2h-3z" fill="#deb10e" stroke="#fff" strokeWidth=".5" /><path d="M10.500 11.500h3.500" stroke="#fff" /></Ico>,
  <Ico s={17} c="none"><path d="M1 15.500c-1-.8-.6-2 .2-2.700L7 8C6 4.500 7 1 11.500 0L10 3l1 2 3-.3 1-2c1 3-1 5.500-4.500 5.800L4 15.300c-.9.900-2 1.100-3 .2z" fill={G} /><circle cx="12" cy="12" r="4.300" fill={G} stroke="#fbfbfd" strokeWidth=".8" /><path d="M12 9.800v4.400M9.800 12h4.400" stroke="#fff" strokeWidth="1.200" /></Ico>,
];
const ToolsPanel = () => (
  <Panel>
    <Tool $h={35}><Ico s={16} c={G} sw={1.600}><circle cx="6.800" cy="6.800" r="6" /><path d="M11.300 11.300 15 15" strokeWidth="2.300" /><path d="M5.800 4.500v4.600L3.200 6.800zM7.800 4.500v4.600l2.600-2.300z" fill={G} stroke="none" /></Ico></Tool>
    <Divider />
    {toolIcons.map((n, i) => <Tool key={i}>{n}</Tool>)}
    <Space />
    <Divider />
    <Tool $h={34}><Ico s={11} h={13} vb="0 0 11 13" c={G} sw={1.800}><path d="M1.200.5v12M2.500 6.500h7.500M7 3.500l3 3-3 3" /></Ico></Tool>
  </Panel>
);

/* ---------- shared desktop taskbar ---------- */
const InnerBar = styled.div`
  height: 30px;
  display: flex;
  align-items: center;
  background: linear-gradient(90deg, #dae3ef, #d3e0ec 60%, #d6e3f3);
  color: #222;
`;
const Search = styled.div<{ $outer?: boolean }>`
  display: flex;
  align-items: center;
  flex: none;
  ${(p) =>
    p.$outer
      ? css`width: 344px; height: 40px; padding-left: 11px; gap: 12px; font-size: 14.500px; color: #3b3b3b; background: #f2f2f2; border: 1px solid #b8b8b8;`
      : css`width: 258px; height: 29px; padding-left: 7px; gap: 8px; font-size: 11.500px; color: #5b5b5b; background: #fff; border: 1px solid #d0d0d0;`}
`;
const App30 = styled.div<{ $w?: number; $run?: boolean; $on?: boolean }>`
  width: ${(p) => p.$w ?? 36.750}px;
  height: 30px;
  flex: none;
  display: flex;
  align-items: center;
  justify-content: center;
  position: relative;
  ${(p) => p.$on && css`background: #f1f5fa;`}
  &::after {
    content: '';
    display: ${(p) => (p.$run || p.$on ? 'block' : 'none')};
    position: absolute;
    bottom: 0;
    left: ${(p) => (p.$on ? 0 : 3.500)}px;
    right: ${(p) => (p.$on ? 0 : 3.500)}px;
    height: 2px;
    background: #2577c9;
  }
`;
const Clock = styled.div<{ $w: number; $outer?: boolean }>`
  width: ${(p) => p.$w}px;
  flex: none;
  display: flex;
  flex-direction: column;
  align-items: center;
  ${(p) => (p.$outer ? css`font-size: 12px; line-height: 18px; color: #fff;` : css`font-size: 9.300px; line-height: 13.500px; color: #333;`)}
`;
const WinLogo = ({ s, c }: { s: number; c: string }) => (
  <Ico s={s} c="none"><path d="M0 2.200 6.800 1.300v6.200H0zM7.700 1.200 16 0v7.500H7.700zM0 8.500h6.800v6.200L0 13.800zM7.700 8.500H16V16l-8.300-1.200z" fill={c} /></Ico>
);
const Lens = ({ s, c }: { s: number; c: string }) => (
  <Ico s={s} c={c} sw={1.200}><circle cx="10" cy="6" r="5" /><path d="M6.300 9.700.8 15.200" /></Ico>
);
const TaskView = ({ s, c }: { s: number; c: string }) => (
  <Ico s={s} c={c} sw={1.200}><path d="M.8 1v1.700h9.400V1M.8 15v-1.700h9.400V15M.8 5h9.400v6H.8zM14 .8v4M14 9.500v6" /><rect x="13" y="5.500" width="2.200" height="2.500" fill={c} stroke="none" /></Ico>
);
const Folder = ({ s }: { s: number }) => (
  <Ico s={s} c="none"><path d="M0 1.500h6l1.200 1.300H16V14H0z" fill="#e5a819" /><path d="M0 4h16v10H0z" fill="#fcd462" /><path d="M2.700 14.800V9.500c0-.8.500-1.300 1.300-1.300h8c.8 0 1.300.5 1.300 1.300v5.300h-3V11.500H5.700v3.300z" fill="#3f9ce0" /></Ico>
);
const EdgeLogo = ({ s }: { s: number }) => (
  <Ico s={s} c="none">
    <defs>
      <linearGradient id={`eg${s}`} x1="0" y1="0" x2="1" y2=".4"><stop offset="0" stopColor="#2aa8e6" /><stop offset=".5" stopColor="#2fc3bd" /><stop offset="1" stopColor="#63dc50" /></linearGradient>
      <linearGradient id={`eb${s}`} x1="0" y1="0" x2="1" y2="1"><stop offset="0" stopColor="#1b8fdf" /><stop offset="1" stopColor="#0b4fa8" /></linearGradient>
    </defs>
    <path d="M.1 7C.5 3 4 1.500 8 3c3 1 4 4 2 6-.5 1.500 1.500 3 4.500 1.800.6-.2.800.2.500.7A8 8 0 0 1 8 16C3.500 16 0 12.500 0 8z" fill={`url(#eb${s})`} />
    <path d="M.1 7C.8 2.800 4 0 8 0c4.600 0 8 3.300 8 6.800 0 2.600-2 4.200-4.200 4.200-1.500 0-2.700-.6-2.400-1.300 1.600-2-.4-4.600-3.400-4.600C3.500 5.100.8 5.800.1 7z" fill={`url(#eg${s})`} />
    <path d="M6.500 7c-1.500 3.500 1 6.500 4.500 6.800 1 0 2-.2 3-.8A8 8 0 0 1 8 16c-3-.5-5-3-4.500-6 .3-1.500 1.500-2.700 3-3z" fill="#0d4fa0" />
  </Ico>
);
const Chrome = () => (
  <Ico s={18} c="none"><circle cx="8" cy="8" r="8" fill="#fbc116" /><path d="M8 8 1 4A8 8 0 0 1 15 4z" fill="#dd4b3e" /><path d="M8 8 1 4a8 8 0 0 0 6.500 12L11.500 9z" fill="#2ba24c" /><path d="M8 4.200h7A8 8 0 0 0 1 4l3.500 5z" fill="#dd4b3e" /><circle cx="8" cy="8" r="3.900" fill="#f4f6f8" /><circle cx="8" cy="8" r="3" fill="#4285f4" /></Ico>
);
const inner: { n: React.ReactNode; w?: number; run?: boolean; on?: boolean }[] = [
  { n: <Ico s={18} c="none"><circle cx="7.500" cy="8" r="7.500" fill="#e38a2b" /><circle cx="8.500" cy="8" r="7.500" fill="#2c2255" /><path d="M1.500 6h14M1 8.200h15M1.500 10.300h14" stroke="#c9c6dd" strokeWidth="1.200" /></Ico> },
  { n: <Folder s={17} />, run: true },
  { n: <Ico s={18} c="none"><path d="M0 6 8 .5 16 6v9H0z" fill="#0b5bab" /><path d="M2 5h12v6H2z" fill="#f0f6fb" /><path d="M0 6l8 5 8-5v9.500H0z" fill="#1d93e6" /><path d="M0 15.500 8 10l8 5.500z" fill="#34b0f3" /></Ico> },
  { n: <EdgeLogo s={18} /> },
  { n: <Ico s={18} c="none"><circle cx="8" cy="8.500" r="7.300" fill="#f5602b" /><path d="M8 1c4-1 7.500 3.500 7.300 7.500A7.300 7.300 0 0 1 12 14.500C14 9 11 7 8 1z" fill="#fdb92d" /><path d="M1.200 6C1.500 3.500 3 2 3 2l1.500 2.500z" fill="#f9a12a" /><circle cx="8" cy="9" r="3.500" fill="#8b3fd0" /><path d="M4 7c2-1 4-.5 4.500.5L6 9z" fill="#f98b2b" /></Ico> },
  { n: <Ico s={17} c="none"><path d="M8 0l7 3.500v9L8 16l-7-3.500v-9z" fill="#1d3d66" /><path d="M3 4.500 8 7.500l5-3M8 7.500V14" stroke="#d7e4f2" strokeWidth="1.800" /></Ico> },
  { n: <Ico s={18} c="none"><circle cx="8" cy="8" r="8" fill="#14b4dd" /><path d="M14.500 3.500A8 8 0 0 1 4 15z" fill="#145a6e" /><circle cx="7.800" cy="7.800" r="4.700" fill="#f0faf8" /><path d="M11.500 5a4.700 4.700 0 0 1-6.800 6.300z" fill="#b9e08a" /></Ico> },
  { n: <Ico s={18} c="none"><path d="M1 3h14v10.500c0 3-14 3-14 0z" fill="#a9a9a9" /><path d="M10 3h5v10.500c0 1-2 1.800-5 2z" fill="#868686" /><ellipse cx="8" cy="3" rx="7" ry="2.300" fill="#dadada" /><path d="M1 7c1 2.300 13 2.300 14 0M1 10.700c1 2.300 13 2.300 14 0" stroke="#e9e9e9" strokeWidth="1.100" /></Ico> },
  { n: <Chrome />, run: true },
  { n: <Ico s={18} c="none"><path d="M8 0l7 3.500v9L8 16l-7-3.500v-9z" fill="#a2c639" /><path d="M3 4.500 8 7l5-2.500M8 7v7" stroke="#c9e07f" strokeWidth="1.300" /></Ico> },
  { n: <Ico s={18} c="none"><path d="M1 1h12v14.500H1z" fill="#f4f6ee" stroke="#8b968c" strokeWidth=".7" /><path d="M1 9.500h12v6H1z" fill="#6cae2c" /><path d="M3.500 9V4M6 9V6.500M8 9V6M10 9V7" stroke="#333" /><path d="M15.500.5 9 11.500" stroke="#c88a3c" strokeWidth="1.800" /></Ico>, run: true },
  { n: <Ico s={18} c="none"><ellipse cx="8" cy="8" rx="7.800" ry="8" fill="#df2734" /><ellipse cx="8" cy="8" rx="3.500" ry="5.800" fill="#d5e1ed" /></Ico> },
  { n: <Ico s={17} c="none"><rect width="16" height="16" rx="2.200" fill="#b81506" /><path d="M3 12c3-1.800 5-5 4.600-8.500C7.800 7.500 9.500 9.700 13 10 9.300 9.500 6 10.200 3 12z" stroke="#fff" strokeWidth="1.300" /></Ico>, on: true },
  { n: <Chrome />, run: true },
  { n: <Ico s={17} h={15} vb="0 0 17 15" c="none"><rect width="17" height="15" fill="#111" /><rect width="17" height="2" fill="#9aa1a8" /><path d="M2 5.500h2.500M6 5.500h1M9 5.500h2M12 6.300h3" stroke="#ddd" strokeWidth="1.200" /></Ico>, run: true },
];
const tray: React.ReactNode[] = [
  <Ico s={13} c="#333" sw={1.500}><path d="M4 12.500a3 3 0 0 1 0-6 4 4 0 0 1 7.500-.5 3.300 3.300 0 0 1 .5 6.500zM1.500 3 14.500 14" /></Ico>,
  <Ico s={13} c="none"><path d="M8 .5c2 1.200 4.500 2 7 2V8c0 3.500-3.500 6-7 7.500C4.500 14 1 11.500 1 8V2.500c2.500 0 5-.8 7-2z" fill="#fff" stroke="#222" strokeWidth="1.500" /><path d="M8 1v14M1 7.500h14" stroke="#222" strokeWidth="1.500" /><path d="M11 7l5 9H7z" fill="#f6b21b" /></Ico>,
  <Ico s={13} c="none"><circle cx="8" cy="8" r="8" fill="#2b96ea" /><circle cx="5" cy="9" r="2.500" stroke="#fff" strokeWidth="1.400" /><circle cx="10.500" cy="5.500" r="1.800" stroke="#fff" strokeWidth="1.400" /><circle cx="11" cy="11" r="1.800" stroke="#fff" strokeWidth="1.400" /></Ico>,
  <Ico s={13} c="#333" sw={1.400}><path d="M3 5h7v10H3zM4.500 1h4v4M4.500 1v4M12.500 9v3c0 2-1.500 2.500-2.500 2.500" /></Ico>,
  <Ico s={13} c="none"><path d="M3 2h8l4 3v6l-4 4H6z" fill="#2b9be8" /><rect x="0" y="6" width="8" height="6" rx="2" fill="#d7e5f3" stroke="#5c93c4" /><circle cx="11" cy="8" r="2.500" fill="#9bdcf8" /></Ico>,
  <Ico s={13} c="#333" sw={1.300}><path d="M1 6v4h2.500L7 13.500v-11L3.500 6zM9 6a3 3 0 0 1 0 4M11 4a6 6 0 0 1 0 8M13 2a9 9 0 0 1 0 12" /></Ico>,
  <Ico s={14} c="#333" sw={1.400}><path d="M5 3h10v8H5zM7.500 14.500h5M10 11v3.500M1 2h3v5H1zM2.500 7v7.500h3" /></Ico>,
  <Ico s={11} c="none"><path d="M0 3l9-2 2 4v4h4v6H0z" fill="#555" /><path d="M1 11h13" stroke="#aaa" strokeWidth="1.500" /></Ico>,
  <Ico s={12} c="none"><rect width="16" height="16" rx="1.500" fill="#1f8de0" /><path d="M3 5h7M3 8h6M7 11h6M12 4v4" stroke="#bfe2fa" strokeWidth="1.500" /></Ico>,
  <Ico s={13} c="none"><rect x="5" y="0" width="6.500" height="10.500" rx="2.500" fill="#111" /><path d="M3 7.500a5.200 5.200 0 0 0 10.300 0M8.200 12.500V16M5.500 15.500h5.500" stroke="#111" strokeWidth="1.600" /></Ico>,
];
const Rule30 = styled.div`
  width: 1px;
  height: 30px;
  flex: none;
  background: #b3c0ce;
`;
const SharedTaskbar = () => (
  <InnerBar>
    <Slot $w={36.500}><WinLogo s={12} c="#111" /></Slot>
    <Search><Lens s={13} c="#444" /><Fit w={121}>Escribe aquí para buscar</Fit></Search>
    <App30 $w={36}><TaskView s={13} c="#333" /></App30>
    <Space $w={1.500} />
    {inner.map((a, i) => <App30 key={i} $w={a.w} $run={a.run} $on={a.on}>{a.n}</App30>)}
    <Space />
    {tray.map((n, i) => <Slot key={i} $w={18}>{n}</Slot>)}
    <Space $w={5} />
    <Clock $w={44}><Fit w={20.500}>18:36</Fit><Fit w={43.500}>28/05/2021</Fit></Clock>
    <Space $w={13} />
    <Slot $w={14}><Ico s={13} c="none"><path d="M0 1h15v10.500H9l-4 3.500v-3.500H0z" fill="#111" /><path d="M3 4h9M3 6.500h9M3 9h6" stroke="#cfdbe8" /><circle cx="13" cy="11.500" r="3.500" fill="#111" stroke="#ccd" strokeWidth=".8" /></Ico></Slot>
    <Space $w={14} />
    <Rule30 />
    <Space $w={3} />
  </InnerBar>
);

/* ---------- floating items ---------- */
const Notice = styled.div`
  position: absolute;
  left: 425px;
  top: 721px;
  width: 412px;
  height: 31px;
  display: flex;
  align-items: center;
  padding-left: 8.500px;
  font-size: 9.800px;
  color: #555;
  background: #fff;
  border: 1px solid #d5d5d5;
  box-shadow: 0 1px 2px rgba(0, 0, 0, 0.350);
`;
const Stop = styled.div`
  width: 102px;
  height: 24px;
  flex: none;
  display: flex;
  align-items: center;
  justify-content: center;
  margin: 0 7px 0 7.500px;
  border-radius: 3px;
  font-weight: 700;
  font-size: 9.500px;
  color: #fff;
  background: #1a73e8;
`;
const Hide = styled.span`
  color: #3f86ea;
`;
const Brand = styled.div`
  position: absolute;
  left: 22px;
  top: 35px;
  display: flex;
  align-items: center;
  gap: 5px;
  color: rgba(255, 255, 255, 0.930);
`;
const BrandText = styled.div`
  display: flex;
  flex-direction: column;
  align-items: flex-start;
  font-family: "Liberation Sans", Arial, sans-serif;
  font-size: 13.500px;
  line-height: 14px;
`;
const BrandName = styled.div`
  font-family: "DejaVu Sans", sans-serif;
  font-weight: 700;
  font-size: 17.500px;
  line-height: 20px;
  -webkit-text-stroke: 0.500px rgba(255, 255, 255, 0.930);
`;
const Quality = styled.div`
  position: absolute;
  right: 30px;
  top: 29.500px;
  width: 40px;
  height: 40px;
  display: flex;
  align-items: center;
  justify-content: center;
  border-radius: 50%;
  font-weight: 700;
  font-size: 13px;
  color: rgba(255, 255, 255, 0.850);
  background: #b8c5db;
`;
const Film = styled.div`
  position: absolute;
  right: 9px;
  bottom: 19px;
`;
const Watermark = styled.div`
  position: absolute;
  left: 1258px;
  top: 701px;
  display: flex;
  flex-direction: column;
  align-items: flex-start;
  font-size: 20px;
  line-height: 29px;
  color: rgba(148, 148, 148, 0.600);
`;
const WatermarkSmall = styled.div`
  font-size: 14.500px;
  line-height: 17px;
`;

/* ---------- host taskbar ---------- */
const Taskbar = styled.div`
  height: 40px;
  display: flex;
  align-items: center;
  background: #1c1c1c;
`;
const ActiveApp = styled.div`
  width: 47.500px;
  height: 40px;
  flex: none;
  display: flex;
  align-items: center;
  justify-content: center;
  padding-left: 3px;
  background: #484848;
  border-bottom: 2px solid #76b9ed;
  border-right: 3px solid #3b3b3b;
`;
const Peek = styled.div`
  width: 1px;
  height: 40px;
  background: #7a7a7a;
`;

const star = 'M0-2 .5-.6 2-.6.8.3 1.200 1.700 0 .8-1.200 1.700-.8.3-2-.6-.5-.6z';

export default function App() {
  return (
    <>
      <Global />
      <TabStrip />
      <Nav />
      <Stage>
        <Gutter $side="left" />
        <Share>
          <AcrobatTop />
          <Work>
            <Handle $w={14} $edge="right"><Ico s={5} h={8} vb="0 0 5 8" c="none"><path d="M0 0l5 4-5 4z" fill="#555" /></Ico></Handle>
            <Desk><DocPage /></Desk>
            <Scroll>
              <Arrow><Ico s={6} h={4} vb="0 0 6 4" c="#444" sw={1.500}><path d="M.6 3.500 3 1l2.400 2.500" /></Ico></Arrow>
              <Thumb />
              <Arrow><Ico s={6} h={4} vb="0 0 6 4" c="#444" sw={1.500}><path d="M.6.5 3 3 5.400.5" /></Ico></Arrow>
            </Scroll>
            <Handle $w={14} $edge="left"><Ico s={5} h={8} vb="0 0 5 8" c="none"><path d="M5 0 0 4l5 4z" fill="#555" /></Ico></Handle>
            <ToolsPanel />
          </Work>
          <SharedTaskbar />
          <Notice>
            <Ico s={4} h={8} vb="0 0 4 8" c="#bbb"><path d="M.5 0v8M3.500 0v8" /></Ico>
            <Space $w={6} />
            <Fit w={239}>jitsimeet03.educa.madrid.org está compartiendo tu pantalla.</Fit>
            <Stop><Fit w={77}>Dejar de compartir</Fit></Stop>
            <Hide><Fit w={29}>Ocultar</Fit></Hide>
          </Notice>
        </Share>
        <Gutter $side="right" />
        <Brand>
          <Ico s={31} vb="0 0 31 31" c="none">
            <rect x=".5" y=".5" width="30" height="30" fill="#d00a10" stroke="#e8c9c9" />
            <g fill="#fff">
              {[6, 12.200, 18.400, 24.600].map((x) => <path key={x} d={star} transform={`translate(${x} 13.500) scale(1.400)`} />)}
              {[9.100, 15.300, 21.500].map((x) => <path key={x} d={star} transform={`translate(${x} 18) scale(1.400)`} />)}
            </g>
          </Ico>
          <Ico s={32} vb="0 0 32 32" c="#fff" sw={3}>
            <path d="M23 4.500A13.200 13.200 0 1 0 29.300 15c-.2-2.500-1-4.500-2-6" />
            <path d="M17 7.500l2 5.500 6 .5-4.500 4.200 1.500 6-5.500-3.200-5.500 3.500 1-6.200-4-3.800 5.800-1z" strokeWidth="2.400" />
          </Ico>
          <BrandText>
            <Fit w={60}>Jitsi Meet</Fit>
            <BrandName><Fit w={137}>EducaMadrid</Fit></BrandName>
          </BrandText>
        </Brand>
        <Quality>HD</Quality>
        <Film><Ico s={9} h={13} vb="0 0 9 13" c="#e6e6e6" sw={2}><path d="M7.500 1 1.500 6.500l6 5.500" /></Ico></Film>
        <Watermark>
          <Fit w={147}>Activar Windows</Fit>
          <WatermarkSmall><Fit w={274}>Ve a Configuración para activar Windows.</Fit></WatermarkSmall>
        </Watermark>
      </Stage>
      <Taskbar>
        <Slot $w={48}><WinLogo s={16} c="#fff" /></Slot>
        <Search $outer><Lens s={16} c="#222" /><Fit w={161}>Escribe aquí para buscar</Fit></Search>
        <Slot $w={47}><Ico s={15} c="#fff" sw={2}><circle cx="8" cy="8" r="6.500" /></Ico></Slot>
        <Slot $w={49}><TaskView s={17} c="#e8e8e8" /></Slot>
        <Space $w={2} />
        <Slot $w={50}><Folder s={22} /></Slot>
        <ActiveApp><EdgeLogo s={24} /></ActiveApp>
        <Space />
        <Slot $w={24}><Ico s={12} h={8} vb="0 0 12 8" c="#fff" sw={1.300}><path d="M.7 7 6 1.500 11.300 7" /></Ico></Slot>
        <Slot $w={24}><Ico s={16} c="#fff" sw={1.100}><rect x="2.500" y="5" width="7.500" height="6.500" rx="1" /><path d="M10 7.500l3-1.700v5L10 9M4 2.200C6 .2 10 .2 12 2.200M4 14c2 2 6 2 8 0" /></Ico></Slot>
        <Slot $w={23}><Ico s={16} c="none"><rect x="5" y="0" width="6" height="11" rx="1.500" fill="#fff" /><path d="M2.500 8.500v2.200c0 1.500.7 2 2 2h7c1.300 0 2-.5 2-2V8.500M8 12.700V16M5.500 15.500h5" stroke="#fff" strokeWidth="1.100" /></Ico></Slot>
        <Slot $w={27}><Ico s={14} c="#cfcfcf" sw={1.100}><path d="M1 15A14 14 0 0 1 15 1M4.500 15A10.500 10.500 0 0 1 15 4.500M8 15a7 7 0 0 1 7-7M11 15a4 4 0 0 1 4-4" /><circle cx="14" cy="14.200" r="1.300" fill="#fff" stroke="none" /></Ico></Slot>
        <Space $w={4} />
        <Clock $w={58} $outer><Fit w={26.500}>18:36</Fit><Fit w={57.500}>28/05/2021</Fit></Clock>
        <Space $w={14} />
        <Slot $w={24}><Ico s={17} c="none"><path d="M0 .5h16v12h-5L8 15.500l-3-3H0z" fill="#fff" /><path d="M3 4h10M3 6.700h10M3 9.400h6.500" stroke="#1c1c1c" /></Ico></Slot>
        <Space $w={15.500} />
        <Peek />
        <Space $w={4} />
      </Taskbar>
    </>
  );
}
